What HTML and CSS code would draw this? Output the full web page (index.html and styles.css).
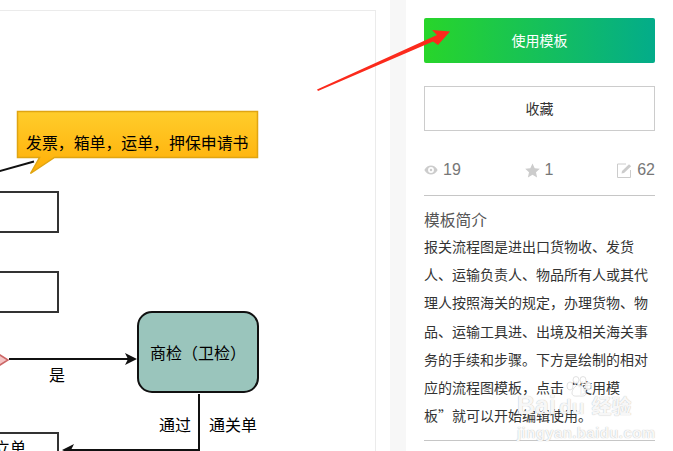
FILE: index.html
```html
<!DOCTYPE html>
<html lang="zh">
<head>
<meta charset="utf-8">
<title>报关流程图模板</title>
<link rel="stylesheet" href="styles.css">
</head>
<body>
<div class="page">
  <main class="stage">
    <div class="canvas">
      <svg class="wires" width="376" height="441" viewBox="0 0 376 441">
        <defs>
          <linearGradient id="callout-fill" x1="0" y1="0" x2="0" y2="1">
            <stop offset="0" stop-color="#ffcd2b"/>
            <stop offset="1" stop-color="#ffae07"/>
          </linearGradient>
        </defs>
        <path class="wire" d="M-2 161.500L34 151.500"/>
        <path class="callout" d="M17.500 101.500H257.500V147.500H54.500L30.500 163.500L39.500 147.500H17.500Z"/>
        <path class="wire" d="M9 349H128"/>
        <path class="head" d="M137 349L125 343L128 349L125 355Z"/>
        <path class="wire" d="M199 384V440H70"/>
        <path class="head" d="M62 440L74 434L71 440L74 446Z"/>
        <path class="diamond" d="M-8 340L8 350L-8 360Z"/>
      </svg>
      <div class="callout-text">发票，箱单，运单，押保申请书</div>
      <div class="box box-a"></div>
      <div class="box box-b"></div>
      <div class="box box-c"><span class="box-c-text">立单</span></div>
      <div class="check">商检（卫检）</div>
      <span class="label label-yes">是</span>
      <span class="label label-pass">通过</span>
      <span class="label label-doc">通关单</span>
    </div>
  </main>
  <div class="gutter"></div>
  <aside class="side">
    <button class="btn btn-primary">使用模板</button>
    <button class="btn btn-outline">收藏</button>
    <div class="stats">
      <span class="stat">
        <svg width="14" height="10" viewBox="0 0 16 12"><path class="ico" fill-rule="evenodd" d="M0 6C2 2 5 .5 8 .5S14 2 16 6C14 10 11 11.500 8 11.500S2 10 0 6ZM8 2.500A3.500 3.500 0 1 0 8 9.500A3.500 3.500 0 1 0 8 2.500ZM8 4.500A1.500 1.500 0 1 1 8 7.500A1.500 1.500 0 1 1 8 4.500Z"/></svg>
        19
      </span>
      <span class="stat">
        <svg width="15" height="15" viewBox="0 0 15 15"><path class="ico" d="M7.500 .5L9.700 5.300L14.800 5.800L11 9.300L12.100 14.500L7.500 11.800L2.900 14.500L4 9.300L.2 5.800L5.300 5.300Z"/></svg>
        1
      </span>
      <span class="stat">
        <svg width="15" height="15" viewBox="0 0 15 15"><path class="ico-line" d="M13.500 7V14.500H.5V1H9"/><path class="ico" d="M4.500 10.500L5 8L12 1.200L14.200 3.300L7 10Z"/></svg>
        62
      </span>
    </div>
    <section class="intro">
      <h2 class="intro-title">模板简介</h2>
      <p class="intro-text">报关流程图是进出口货物收、发货人、运输负责人、物品所有人或其代理人按照海关的规定，办理货物、物品、运输工具进、出境及相关海关事务的手续和步骤。下方是绘制的相对应的流程图模板，点击<span class="quote quote-open">“</span>使用模<br>板<span class="quote quote-close">”</span>就可以开始编辑使用。</p>
    </section>
  </aside>
</div>
<svg class="arrow" width="140" height="74" viewBox="0 0 140 74"><path d="M1 69.500L121 15L116 10L134 11.500L122 25L117 21.500L2 71Z"/></svg>
<div class="watermark">
  <svg class="wm-paw" width="26" height="22" viewBox="0 0 26 22">
    <ellipse cx="4" cy="10" rx="3" ry="4"/>
    <ellipse cx="10" cy="4" rx="3" ry="3.500"/>
    <ellipse cx="17" cy="4" rx="3" ry="3.500"/>
    <ellipse cx="22" cy="10" rx="3" ry="4"/>
    <path d="M13 9C17 9 20 14 20 17C20 21 15 20 13 20S6 21 6 17C6 14 9 9 13 9Z"/>
  </svg>
  <div class="wm-brand"><span class="wm-bai">Bai</span><span class="wm-du">du</span><span class="wm-jy">经验</span></div>
  <span class="wm-url">jingyan.baidu.com</span>
</div>
</body>
</html>
```
FILE: styles.css
```css
* { box-sizing: border-box; }
html, body { margin: 0; height: 100%; overflow: hidden; background: #fff; }
body { font-family: "Noto Sans CJK SC", "Liberation Sans", sans-serif; color: #333; position: relative; }
.page { display: flex; height: 451px; width: 673px; }

.stage { width: 390px; flex: none; padding-top: 10px; }
.canvas { position: relative; width: 376px; height: 441px; border-top: 1px solid #ebebeb; border-right: 1px solid #ebebeb; overflow: hidden; color: #000; font-size: 14px; }
.wires { position: absolute; left: 0; top: -1px; overflow: visible; }
.wire { fill: none; stroke: #111; stroke-width: 2; }
.head { fill: #111; }
.callout { fill: url(#callout-fill); stroke: #e0a512; stroke-width: 1.500; }
.diamond { fill: #f4c4c4; stroke: #c66; stroke-width: 1.500; }

.callout-text { position: absolute; left: 26px; top: 121px; line-height: 22px; white-space: nowrap; font-size: 15.900px; }
.box { position: absolute; left: -10px; width: 69px; background: #fff; border: 2px solid #333; }
.box-a { top: 180px; height: 42px; }
.box-b { top: 260px; height: 42px; }
.box-c { top: 421px; height: 40px; }
.box-c-text { position: absolute; left: 2px; top: 3px; line-height: 20px; white-space: nowrap; font-size: 16px; }
.check { position: absolute; left: 137px; top: 300px; width: 122px; height: 82px; background: #9ac5bc; border: 2px solid #111; border-radius: 15px; display: flex; align-items: center; justify-content: center; font-size: 16px; white-space: nowrap; }
.label { position: absolute; line-height: 20px; font-size: 16px; white-space: nowrap; }
.label-yes { left: 49px; top: 353px; }
.label-pass { left: 159px; top: 403px; }
.label-doc { left: 209px; top: 403px; }

.gutter { width: 16px; flex: none; background: #f7f7f7; }

.side { width: 231px; margin-left: 18px; flex: none; padding-top: 18px; display: flex; flex-direction: column; }
.btn { display: block; width: 231px; height: 45px; font: inherit; font-size: 14px; padding: 0 0 2px; cursor: pointer; }
.btn-primary { border: 0; border-radius: 2px; color: #fff; background: linear-gradient(90deg, #28d52a, #03ac8a); }
.btn-outline { margin-top: 23px; background: #fff; border: 1px solid #ccc; color: #333; }

.stats { display: flex; justify-content: space-between; align-items: center; margin-top: 28px; padding-bottom: 14px; border-bottom: 1px solid #c6c6c6; color: #777; font: 16px/22px "Liberation Sans", sans-serif; }
.stat { display: inline-flex; align-items: center; gap: 5px; }
.ico { fill: #ccc; }
.ico-line { fill: none; stroke: #ccc; stroke-width: 1; }

.intro { border-bottom: 1px solid #c6c6c6; padding-bottom: 11px; margin-top: 12px; }
.intro-title { margin: 0; font-size: 15.750px; font-weight: 400; line-height: 24px; color: #555; }
.intro-text { margin: 0; font-size: 14px; line-height: 28.170px; color: #333; }
.quote { display: inline-block; width: 14px; }
.quote-open { text-align: right; }
.quote-close { text-align: left; }

.arrow { position: absolute; left: 316px; top: 20px; }
.arrow path { fill: #fb2a1c; }

.watermark { position: absolute; left: 517px; top: 376px; width: 156px; display: flex; flex-direction: column; color: rgba(255,255,255,.92); text-shadow: 0 0 1px #aaa; pointer-events: none; }
.wm-paw { margin-left: 49px; display: block; }
.wm-paw ellipse, .wm-paw path { fill: rgba(255,255,255,.9); stroke: #ccc; stroke-width: .6; }
.wm-brand { display: flex; align-items: baseline; white-space: nowrap; font: 700 25px/24px "Liberation Sans", sans-serif; margin-top: -5px; }
.wm-du { margin-left: 3px; font-size: 21px; }
.wm-jy { margin-left: 7px; font: 700 20px/24px "Noto Sans CJK SC", sans-serif; }
.wm-url { font: 700 15px/18px "Liberation Sans", sans-serif; margin-top: 5px; letter-spacing: .4px; white-space: nowrap; }
```
